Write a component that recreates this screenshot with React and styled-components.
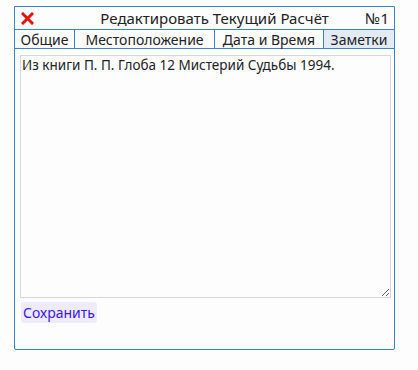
import styled, { createGlobalStyle } from 'styled-components';

const GlobalStyle = createGlobalStyle`
  body {
    margin: 0;
    background: #fdfdfd;
    font-family: "Noto Sans", "Open Sans", sans-serif;
    color: #222;
  }
`;

const tabs = ['Общие', 'Местоположение', 'Дата и Время', 'Заметки'];

export default function App() {
  return (
    <>
      <GlobalStyle />
      <Frame>
        <TitleBar>
          <CloseButton aria-label="close">
            <svg width="13" height="13" viewBox="0 0 13 13">
              <path d="M2 2 L11 11 M11 2 L2 11" stroke="#e8120c" strokeWidth="3" strokeLinecap="square" />
            </svg>
          </CloseButton>
          <Title>Редактировать Текущий Расчёт</Title>
          <Number>№1</Number>
        </TitleBar>
        <TabRow>
          {tabs.map((t, i) => (
            <Tab key={t} $active={i === 3} $grow={[59, 140, 109, 71][i]}>
              {t}
            </Tab>
          ))}
        </TabRow>
        <Body>
          <Notes defaultValue="Из книги П. П. Глоба 12 Мистерий Судьбы 1994." />
          <SaveButton>Сохранить</SaveButton>
        </Body>
      </Frame>
    </>
  );
}

const Frame = styled.div`
  margin: 6px 0 0 14px;
  width: 381px;
  height: 344px;
  box-sizing: border-box;
  border: 1px solid #3a85c8;
  border-radius: 0 0 2px 2px;
  display: flex;
  flex-direction: column;
`;

const TitleBar = styled.div`
  height: 22px;
  display: flex;
  align-items: center;
  padding: 0 5px 0 6px;
  font-size: 15px;
  border-bottom: 1px solid #3a85c8;
`;

const CloseButton = styled.span`
  display: flex;
  width: 14px;
`;

const Title = styled.span`
  flex: 1;
  padding-left: 29px;
  text-align: center;
`;

const Number = styled.span``;

const TabRow = styled.div`
  display: flex;
  height: 18px;
  border-bottom: 1px solid #3a85c8;
`;

const Tab = styled.div`
  flex: 0 0 ${(p) => p.$grow}px;
  box-sizing: border-box;
  display: flex;
  align-items: center;
  justify-content: center;
  font-size: 14px;
  background: ${(p) => (p.$active ? '#e2ebf4' : 'transparent')};
  & + & {
    border-left: 1px solid #3a85c8;
  }
`;

const Body = styled.div`
  padding: 6px 4px 0 5px;
  display: flex;
  flex-direction: column;
  align-items: flex-start;
  gap: 4px;
`;

const Notes = styled.textarea`
  width: 371px;
  height: 243px;
  box-sizing: border-box;
  border: 1px solid #d6d6d6;
  background: #fdfdfd;
  padding: 0 1px;
  margin: 0;
  font-family: "Noto Sans", "Open Sans", sans-serif;
  font-size: 13.5px;
  color: #222;
  outline: none;
`;

const SaveButton = styled.button`
  margin-left: 1px;
  height: 21px;
  padding: 0 2px;
  border: none;
  border-radius: 3px;
  background: #eeebfc;
  color: #3f14f0;
  font-family: "Noto Sans", "Open Sans", sans-serif;
  font-size: 14px;
`;
